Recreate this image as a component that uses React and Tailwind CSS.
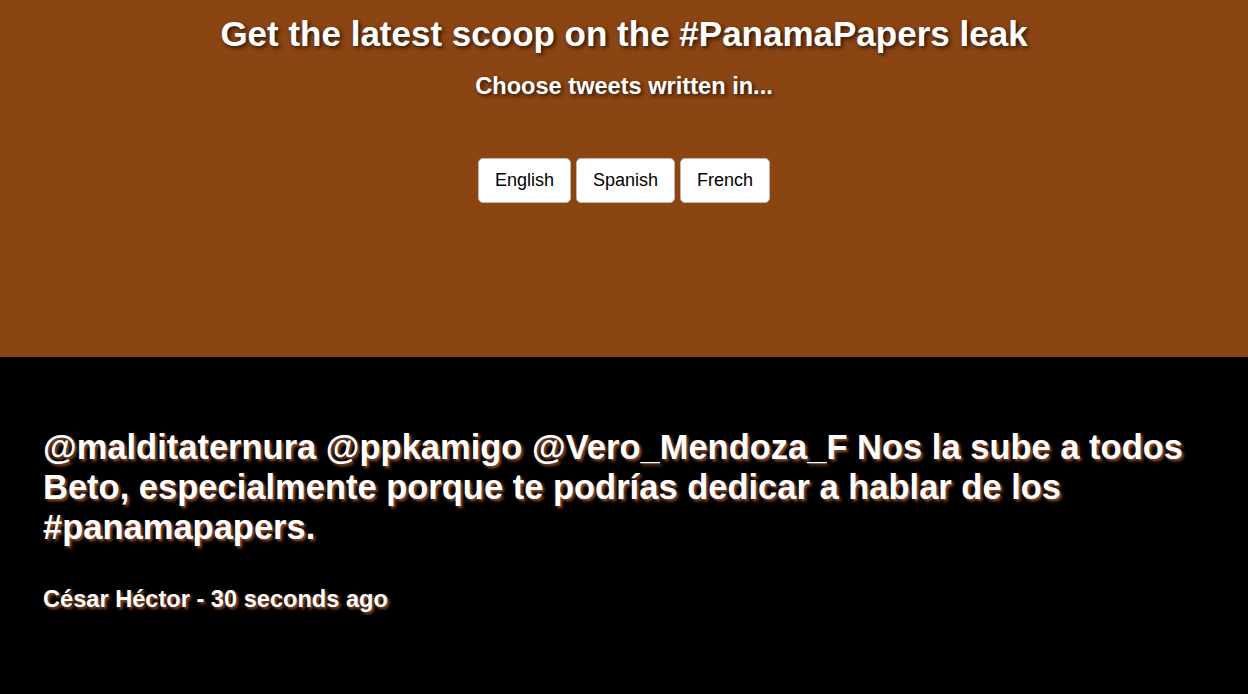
export default function App() {
  const langs = ['English', 'Spanish', 'French'];

  return (
    <div className="min-h-screen bg-black font-['Liberation_Sans',Arial,sans-serif]">
      {/* cabecera */}
      <header className="h-[357px] bg-[#8b4513] text-center text-white">
        <h1 className="pt-[14px] text-[35px] leading-[40px] font-bold [text-shadow:2px_2px_4px_rgba(0,0,0,0.7)]">
          Get the latest scoop on the #PanamaPapers leak
        </h1>
        <h2 className="mt-[18px] text-[23.6px] leading-[28px] font-bold [text-shadow:2px_2px_4px_rgba(0,0,0,0.7)]">
          Choose tweets written in...
        </h2>
        <div className="mt-[58px] flex justify-center gap-[5px]">
          {langs.map((l) => (
            <button
              key={l}
              className="h-[45px] px-4 rounded-[5px] border border-[#c8b8a8] bg-white text-[18px] text-black"
            >
              {l}
            </button>
          ))}
        </div>
      </header>

      {/* tweet */}
      <section className="px-[43px] pt-[70px] pb-10 text-white">
        <p className="text-[34.5px] leading-[40px] font-bold [text-shadow:2px_2px_3px_#a0522d]">
          @malditaternura @ppkamigo @Vero_Mendoza_F Nos la sube a todos Beto, especialmente porque te podrías dedicar a hablar de los #panamapapers.
        </p>
        <p className="mt-[38px] text-[23.6px] leading-[28px] font-bold [text-shadow:2px_2px_3px_#a0522d]">
          César Héctor - 30 seconds ago
        </p>
      </section>
    </div>
  );
}
